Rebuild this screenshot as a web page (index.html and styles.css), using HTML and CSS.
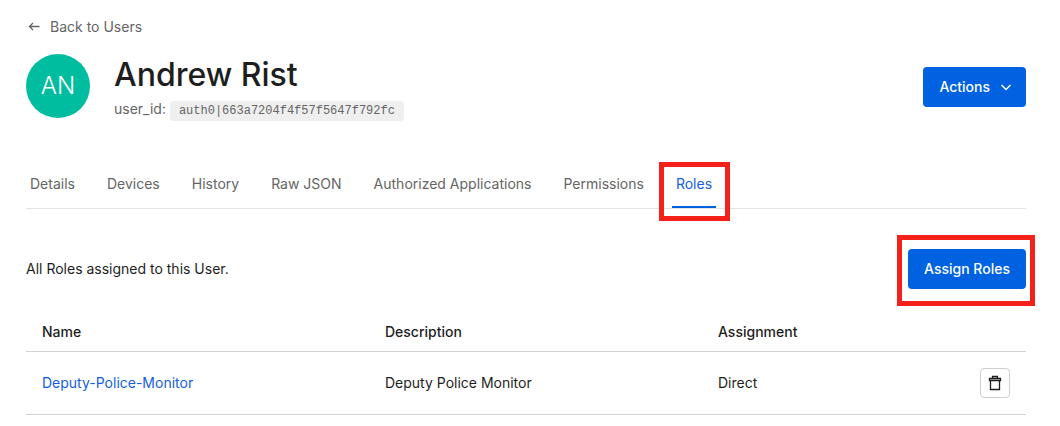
FILE: index.html
```html
<!DOCTYPE html>
<html lang="en">
<head>
<meta charset="utf-8">
<title>User Details</title>
<link rel="stylesheet" href="styles.css">
</head>
<body>
<main class="page">
  <a class="back" href="#">
    <svg class="back-icon" viewBox="0 0 14 14" width="14" height="14" aria-hidden="true"><path d="M11.500 6.500H1.500M5 3 1.500 6.500 5 10"/></svg>
    Back to Users
  </a>
  <header class="profile">
    <div class="avatar">AN</div>
    <div class="identity">
      <h1 class="name">Andrew Rist</h1>
      <p class="user-id">user_id: <code class="code">auth0|663a7204f4f57f5647f792fc</code></p>
    </div>
    <button class="button button-menu" type="button">Actions
      <svg class="chevron" viewBox="0 0 12 12" width="12" height="12" aria-hidden="true"><path d="m1.500 4 4.500 4.500L10.500 4"/></svg>
    </button>
  </header>
  <nav class="tabs">
    <a class="tab" href="#">Details</a>
    <a class="tab" href="#">Devices</a>
    <a class="tab" href="#">History</a>
    <a class="tab" href="#">Raw JSON</a>
    <a class="tab" href="#">Authorized Applications</a>
    <a class="tab" href="#">Permissions</a>
    <a class="tab tab-active marked marked-tab" href="#" aria-current="page">Roles</a>
  </nav>
  <section class="toolbar">
    <p class="summary">All Roles assigned to this User.</p>
    <div class="marked marked-button"><button class="button" type="button">Assign Roles</button></div>
  </section>
  <table class="roles">
    <thead>
      <tr><th class="col-name">Name</th><th class="col-description">Description</th><th>Assignment</th><th class="col-action" aria-label="Remove"></th></tr>
    </thead>
    <tbody>
      <tr>
        <td><a class="link" href="#">Deputy-Police-Monitor</a></td>
        <td>Deputy Police Monitor</td>
        <td>Direct</td>
        <td class="col-action"><button class="icon-button" type="button" aria-label="Remove role">
          <svg class="trash" viewBox="0 0 16 16" width="16" height="16" aria-hidden="true"><path d="M2.500 3.500h11v2h-11zM5.500 3.500v-2h5v2M3.500 5.500v9h9v-9"/></svg>
        </button></td>
      </tr>
    </tbody>
  </table>
</main>
</body>
</html>
```
FILE: styles.css
```css
* { box-sizing: border-box; }
body { margin: 0; background: #fff; color: #1e1e1e; font: 14px/20px Inter, sans-serif; }
.page { padding: 17px 34px 0 26px; }
h1, p { margin: 0; }
svg { fill: none; stroke: currentColor; }
.back { display: flex; width: fit-content; align-items: center; gap: 8px; color: #656565; text-decoration: none; }
.back-icon { margin-left: 2px; stroke-width: 1.3; }
.profile { display: flex; align-items: center; margin-top: 17px; }
.avatar { display: flex; align-items: center; justify-content: center; align-self: flex-start; width: 64px; height: 64px; border-radius: 50%; background: #00bda0; color: #fff; font-size: 24px; font-weight: 300; }
.identity { flex: 1; margin-left: 24px; padding: 1px 0; }
.name { font-size: 32px; line-height: 40px; font-weight: 500; }
.user-id { margin-top: 4px; color: #656565; }
.code { padding: 3px 9px; border-radius: 4px; background: #efefef; font: 12px/16px "Liberation Mono", monospace; }
.button { display: inline-flex; align-items: center; justify-content: center; gap: 10px; height: 40px; padding: 0 16px; border: 0; border-radius: 4px; background: #0062e0; color: #fff; font: 500 14px/20px Inter, sans-serif; }
.button-menu { padding-right: 14px; }
.chevron { stroke-width: 1.5; }
.tabs { display: flex; gap: 24px; margin-top: 46px; border-bottom: 1px solid #e3e3e3; }
.tab { position: relative; padding: 8px 4px 14px; color: #656565; text-decoration: none; }
.tab-active { color: #1460dc; }
.tab-active::before { content: ""; position: absolute; inset: auto 0 0; height: 2px; background: #0062e0; }
.marked { position: relative; }
.marked::after { content: ""; position: absolute; border: 5px solid #f4211a; pointer-events: none; }
.marked-tab::after { inset: -4px -14px -13px -13px; }
.marked-button::after { inset: -14px -9px -17px -11px; }
.toolbar { display: flex; align-items: center; justify-content: space-between; margin-top: 40px; }
.roles { width: 100%; margin-top: 24px; border-collapse: collapse; table-layout: fixed; }
.roles th, .roles td { padding: 0 16px; text-align: left; border-bottom: 1px solid #d2d2d2; }
.roles th { height: 38px; font-weight: 500; }
.roles td { height: 63px; }
.col-name { width: 34.3%; }
.col-description { width: 33.3%; }
.roles .col-action { text-align: right; }
.link { color: #1460dc; text-decoration: none; }
.icon-button { display: inline-flex; align-items: center; justify-content: center; width: 30px; height: 30px; padding: 0; border: 1px solid #cfcfcf; border-radius: 4px; background: #fff; color: #1e1e1e; vertical-align: middle; }
.trash { stroke-width: 1.3; }
```
